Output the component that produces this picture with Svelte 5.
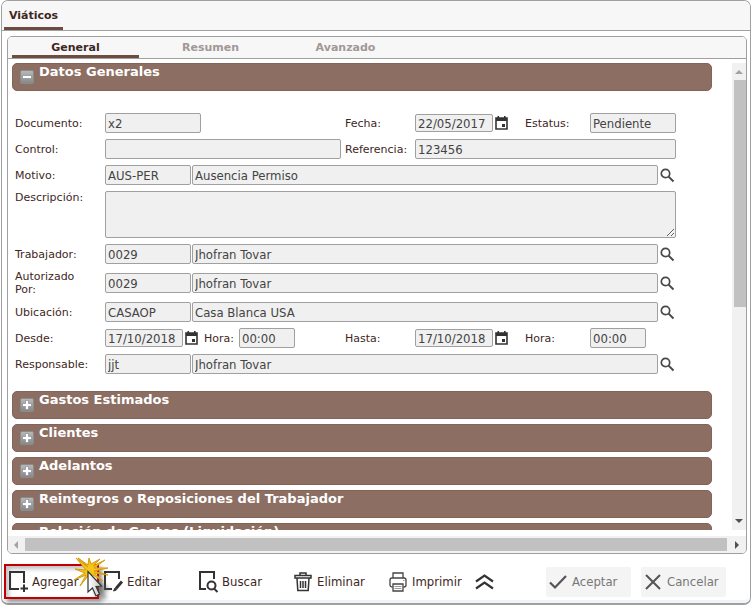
<script lang="ts">
  let activeTab = "General";
  const tabs = ["General", "Resumen", "Avanzado"];

  let sections = [
    { title: "Gastos Estimados", open: false },
    { title: "Clientes", open: false },
    { title: "Adelantos", open: false },
    { title: "Reintegros o Reposiciones del Trabajador", open: false },
    { title: "Relación de Gastos (Liquidación)", open: false },
  ];

  const trabajadores = [
    { id: "trabajador", label: "Trabajador:", code: "0029", name: "Jhofran Tovar" },
    { id: "autorizado", label: "Autorizado Por:", code: "0029", name: "Jhofran Tovar" },
    { id: "ubicacion", label: "Ubicación:", code: "CASAOP", name: "Casa Blanca USA" },
  ];
</script>

{#snippet calendar()}
  <button class="icon" type="button" aria-label="Fecha">
    <svg width="13" height="14" viewBox="0 0 13 14">
      <path d="M1 2h11v11H1z" fill="none" stroke="#333" stroke-width="1.6" />
      <path d="M1 2h11v3H1zM2.5 0h1.6v3H2.5zM9 0h1.6v3H9zM7 8h3v3H7z" fill="#333" />
    </svg>
  </button>
{/snippet}

{#snippet lookup(id: string, label: string, code: string, name: string)}
  <label for={id}>{label}</label>
  <div class="field wide lookup">
    <input {id} class="code" type="text" value={code} readonly />
    <input class="name" type="text" value={name} aria-label={label} readonly />
    <button class="icon" type="button" aria-label="Buscar">
      <svg width="15" height="15" viewBox="0 0 15 15" fill="none" stroke="#484848">
        <circle cx="5.5" cy="5.5" r="4.2" stroke-width="1.7" />
        <path d="M8.6 8.6L13.500 13.500" stroke-width="2" />
      </svg>
    </button>
  </div>
{/snippet}

{#snippet sectionHeader(title: string, open: boolean, toggle: () => void)}
  <button class="section" type="button" aria-expanded={open} on:click={toggle}>
    <svg width="14" height="14" viewBox="0 0 14 14">
      <defs>
        <linearGradient id="knob" x1="0" y1="0" x2="0" y2="1">
          <stop offset="0" stop-color="#bababa" />
          <stop offset="1" stop-color="#868686" />
        </linearGradient>
      </defs>
      <rect x="0.5" y="0.5" width="13" height="13" rx="1.5" fill="url(#knob)" stroke="#8b8b8b" />
      {#if open}
        <path d="M2.5 5.5h9v3h-9z" fill="#fff" stroke="#858b96" stroke-width="0.7" />
      {:else}
        <path
          d="M5.5 2.5h3v3h3v3h-3v3h-3v-3h-3v-3h3z"
          fill="#fff"
          stroke="#858b96"
          stroke-width="0.7"
        />
      {/if}
    </svg>
    <span>{title}</span>
  </button>
{/snippet}

<main class="window">
  <header class="titlebar">
    <h1>Viáticos</h1>
  </header>

  <section class="panel">
    <nav class="tabs">
      {#each tabs as tab}
        <button type="button" class:active={tab === activeTab} on:click={() => (activeTab = tab)}>
          {tab}
        </button>
      {/each}
    </nav>

    <div class="body">
      <div class="content">
        {@render sectionHeader("Datos Generales", true, () => {})}

        <form class="form">
          <label for="documento">Documento:</label>
          <div class="field"><input id="documento" class="doc" type="text" value="x2" readonly /></div>
          <label for="fecha">Fecha:</label>
          <div class="field">
            <input id="fecha" class="date" type="text" value="22/05/2017" readonly />
            {@render calendar()}
          </div>
          <label for="estatus">Estatus:</label>
          <div class="field"><input id="estatus" class="full" type="text" value="Pendiente" readonly /></div>

          <label for="control">Control:</label>
          <div class="field control"><input id="control" class="full" type="text" readonly /></div>
          <label for="referencia">Referencia:</label>
          <div class="field reference">
            <input id="referencia" class="full" type="text" value="123456" readonly />
          </div>

          {@render lookup("motivo", "Motivo:", "AUS-PER", "Ausencia Permiso")}

          <label for="descripcion" class="top">Descripción:</label>
          <div class="field wide"><textarea id="descripcion" readonly></textarea></div>

          {#each trabajadores as row}
            {@render lookup(row.id, row.label, row.code, row.name)}
          {/each}

          <label for="desde">Desde:</label>
          <div class="field">
            <input id="desde" class="date" type="text" value="17/10/2018" readonly />
            {@render calendar()}
            <label for="hora-desde" class="inline">Hora:</label>
            <input id="hora-desde" class="time" type="text" value="00:00" readonly />
          </div>
          <label for="hasta">Hasta:</label>
          <div class="field">
            <input id="hasta" class="date" type="text" value="17/10/2018" readonly />
            {@render calendar()}
          </div>
          <label for="hora-hasta">Hora:</label>
          <div class="field"><input id="hora-hasta" class="time" type="text" value="00:00" readonly /></div>

          {@render lookup("responsable", "Responsable:", "jjt", "Jhofran Tovar")}
        </form>

        {#each sections as s}
          {@render sectionHeader(s.title, s.open, () => {
            s.open = !s.open;
            sections = sections;
          })}
        {/each}
      </div>

      <div class="scroll vertical">
        <svg width="8" height="4" viewBox="0 0 8 4"><path d="M0 4l4-4 4 4z" fill="#a3a3a3" /></svg>
        <div class="thumb"></div>
        <svg width="8" height="4" viewBox="0 0 8 4"><path d="M0 0h8L4 4z" fill="#505050" /></svg>
      </div>
    </div>

    <div class="scroll horizontal">
      <svg width="4" height="8" viewBox="0 0 4 8"><path d="M4 0v8L0 4z" fill="#a3a3a3" /></svg>
      <div class="thumb"></div>
      <svg width="4" height="8" viewBox="0 0 4 8"><path d="M0 0l4 4-4 4z" fill="#505050" /></svg>
    </div>
  </section>

  <footer class="toolbar">
    <button type="button" class="tool highlighted">
      <svg width="20" height="22" viewBox="0 0 20 22" fill="none" stroke="#333" stroke-width="2">
        <path d="M10 18H1V1H15V12" />
        <path d="M15 13.5V21M11.5 17.5H19" />
      </svg>
      <span>Agregar</span>
      <svg class="pointer" width="50" height="54" viewBox="70 553 50 54">
        <defs>
          <linearGradient id="arrow" x1="0" y1="0" x2="1" y2="0">
            <stop offset="0" stop-color="#fff" />
            <stop offset="1" stop-color="#c6c6c6" />
          </linearGradient>
          <filter id="soft" x="-50%" y="-50%" width="200%" height="200%">
            <feGaussianBlur stdDeviation="2" />
          </filter>
        </defs>
        <path
          d="M95 577V597l5-4 3 7 4-2-3-7 6-1z"
          fill="#555"
          opacity="0.6"
          filter="url(#soft)"
        />
        <path
          d="M88 567L76 558L86 570L75 569L85 573L74 580L86 575L80 586L88 576L92 582L91 574L103 581L94 573L108 575L94 571L108 568L94 568L105 560L93 566L100 559L91 564L89 558L88 565L78 558Z"
          fill="#f5c518"
          stroke="#d59b0c"
          stroke-width="1"
        />
        <path
          d="M88 571.5V592l4.5-4 3.5 8 3.5-2-3.5-7.5 5.5-.5z"
          fill="url(#arrow)"
          stroke="#333"
          stroke-width="1.2"
        />
      </svg>
    </button>
    <button type="button" class="tool">
      <svg width="20" height="22" viewBox="0 0 20 22" fill="none" stroke="#333" stroke-width="2">
        <path d="M8 18H1V1H15V8" />
        <path d="M18 10.5l-6 7" stroke-width="2.8" />
        <path d="M11 17l-1.5 3 3-1z" fill="#333" stroke-width="1" />
      </svg>
      <span>Editar</span>
    </button>
    <button type="button" class="tool">
      <svg width="20" height="22" viewBox="0 0 20 22" fill="none" stroke="#333" stroke-width="2">
        <path d="M7 18H1V1H15V8" />
        <circle cx="12.5" cy="14.5" r="4" />
        <path d="M15 17.5L18.5 21" />
      </svg>
      <span>Buscar</span>
    </button>
    <button type="button" class="tool">
      <svg width="20" height="22" viewBox="0 0 20 22" fill="none" stroke="#333" stroke-width="1.5">
        <path d="M6 4V2h6v2M1 4.5h16v2.500h-16zM3 7.500l.8 12h10.400l.8-12" />
        <path d="M6.500 10v7M9 10v7M11.500 10v7" />
      </svg>
      <span>Eliminar</span>
    </button>
    <button type="button" class="tool">
      <svg width="20" height="22" viewBox="0 0 20 22" fill="none" stroke="#444" stroke-width="1.3">
        <path d="M4 7V2h10v5M3.500 16H3a2 2 0 0 1-2-2V9a2 2 0 0 1 2-2h12a2 2 0 0 1 2 2v5a2 2 0 0 1-2 2h-.5" />
        <path d="M4 13h10V20H4z" />
        <path d="M5.500 15.500h7M5.500 17.500h7M14 9.500h1.500" stroke="#999" stroke-width="1" />
      </svg>
      <span>Imprimir</span>
    </button>
    <button type="button" class="more" aria-label="Más">
      <svg width="20" height="16" viewBox="0 0 20 16" fill="none" stroke="#333" stroke-width="2.2">
        <path d="M1 7.500l8.500-6 8.500 6M1 14.500l8.500-6 8.500 6" />
      </svg>
    </button>

    <div class="actions">
      <button type="button" class="action">
        <svg width="18" height="16" viewBox="0 0 18 16" fill="none" stroke="#555" stroke-width="2.2">
          <path d="M1 8.5l5 5L17 2" />
        </svg>
        <span>Aceptar</span>
      </button>
      <button type="button" class="action">
        <svg width="18" height="16" viewBox="0 0 18 16" fill="none" stroke="#555" stroke-width="2">
          <path d="M2 1l14 14M16 1L2 15" />
        </svg>
        <span>Cancelar</span>
      </button>
    </div>
  </footer>
</main>

<style>
  :global(body) {
    background: #fff;
  }

  * {
    box-sizing: border-box;
  }

  button {
    padding: 0;
    border: 0;
    background: none;
    font: inherit;
    color: inherit;
    cursor: pointer;
  }

  svg {
    display: block;
    flex: none;
  }

  .window {
    display: flex;
    flex-direction: column;
    height: calc(100vh - 1px);
    margin: 0 3px 0 1px;
    border: 1px solid #a0a0a0;
    border-bottom-width: 2px;
    border-radius: 7px;
    font-family: "DejaVu Sans", Verdana, sans-serif;
    font-size: 11px;
    color: #3e2723;
  }

  .titlebar {
    flex: none;
    display: flex;
    height: 30px;
    padding-left: 2px;
    border-bottom: 1px solid #a0a0a0;
    border-radius: 6px 6px 0 0;
    background: #f7f7f7;
  }

  h1 {
    margin: 0;
    padding: 0 5px;
    border-bottom: 3px solid #6d4c41;
    border-radius: 2px 2px 0 0;
    font-size: 11px;
    line-height: 30px;
    height: 29px;
  }

  .panel {
    flex: 1;
    display: flex;
    flex-direction: column;
    min-height: 0;
    margin: 5px 3px 0 5px;
    border: 1px solid #a0a0a0;
    border-radius: 5px;
    overflow: hidden;
  }

  .tabs {
    flex: none;
    display: flex;
    gap: 8px;
    height: 22px;
    padding-left: 4px;
    border-bottom: 1px solid #a0a0a0;
    background: #f7f7f7;
  }

  .tabs button {
    width: 127px;
    padding-top: 2px;
    border-bottom: 3px solid transparent;
    font-weight: bold;
    color: #a19896;
  }

  .tabs .active {
    border-color: #6d4c41;
    color: #3e2723;
  }

  .body {
    flex: 1;
    display: flex;
    min-height: 0;
    margin-top: 4px;
  }

  .content {
    flex: 1;
    min-width: 0;
    padding: 0 20px 0 4px;
    overflow: hidden;
  }

  .section {
    display: flex;
    gap: 5px;
    width: 100%;
    height: 28px;
    margin-bottom: 5px;
    padding: 0 7px;
    border: 1px solid #846459;
    border-radius: 5px;
    background: #8d6e63;
    font-size: 13px;
    font-weight: bold;
    line-height: 16px;
    color: #fff;
  }

  .section svg {
    margin-top: 6px;
  }

  .form {
    display: grid;
    grid-template-columns: 90px 240px 70px 110px 65px minmax(86px, 1fr);
    row-gap: 6px;
    align-items: center;
    margin: 22px 36px 17px 3px;
  }

  .form label {
    line-height: 13px;
  }

  /* keeps long labels on two lines, clear of the fields */
  .form > label:has(+ .lookup) {
    padding-right: 10px;
  }

  .form .top {
    align-self: start;
  }

  .form .inline {
    margin: 0 3px 0 4px;
  }

  .field {
    display: flex;
    align-items: center;
    gap: 2px;
    min-height: 20px;
  }

  .control {
    margin-right: 4px;
  }

  .wide {
    grid-column: 2 / -1;
  }

  .reference {
    grid-column: 4 / -1;
  }

  input,
  textarea {
    height: 20px;
    margin: 0;
    padding: 0 2px;
    border: 1px solid #a0a0a0;
    border-radius: 2px;
    background: #f0f0f0;
    font-family: "DejaVu Sans Condensed", "DejaVu Sans", Tahoma, sans-serif;
    font-size: 13px;
    color: #444;
  }

  textarea {
    display: block;
    width: 100%;
    height: 47px;
    resize: both;
  }

  .doc {
    width: 96px;
  }

  .date {
    width: 78px;
    height: 18px;
  }

  .time {
    width: 56px;
  }

  .full {
    width: 100%;
  }

  .code {
    width: 86px;
  }

  .name {
    flex: 1;
    min-width: 0;
  }

  .lookup {
    gap: 1px;
  }

  .lookup .icon {
    margin: 0 1px;
  }

  .scroll {
    display: flex;
    flex: none;
    align-items: center;
    background: #f1f1f1;
  }

  .thumb {
    background: #c1c1c1;
  }

  .vertical {
    flex-direction: column;
    width: 14px;
    padding: 7px 0;
  }

  .vertical .thumb {
    width: 12px;
    height: 50%;
    margin: 6px 0 auto;
    align-self: flex-end;
  }

  .horizontal {
    height: 17px;
    margin-top: 6px;
    padding: 0 7px 0 6px;
  }

  .horizontal .thumb {
    flex: 1;
    height: 13px;
    margin: 0 8px 0 7px;
  }

  .toolbar {
    flex: none;
    display: flex;
    align-items: center;
    height: 49px;
    padding: 9px 24px 0 2px;
    border-bottom: 3px solid #f0f4f8;
    border-radius: 0 0 6px 6px;
    font-family: "DejaVu Sans Condensed", "DejaVu Sans", Tahoma, sans-serif;
    font-size: 13px;
  }

  .tool {
    position: relative;
    display: flex;
    align-items: center;
    gap: 3px;
    width: 95px;
    height: 35px;
    padding-left: 5px;
  }

  .highlighted {
    padding-left: 3px;
    border: 2px solid #c00000;
    box-shadow: 3px 3px 4px rgba(0, 0, 0, 0.4), inset 3px 3px 4px rgba(0, 0, 0, 0.25);
  }

  .pointer {
    position: absolute;
    z-index: 1;
    top: -13px;
    left: 64px;
  }

  .more {
    margin-left: -4px;
  }

  .actions {
    display: flex;
    gap: 10px;
    margin-left: auto;
  }

  .action {
    display: flex;
    align-items: center;
    gap: 5px;
    width: 85px;
    height: 30px;
    padding-left: 3px;
    border-radius: 2px;
    background: #f4f4f4;
    color: #777;
  }
</style>
